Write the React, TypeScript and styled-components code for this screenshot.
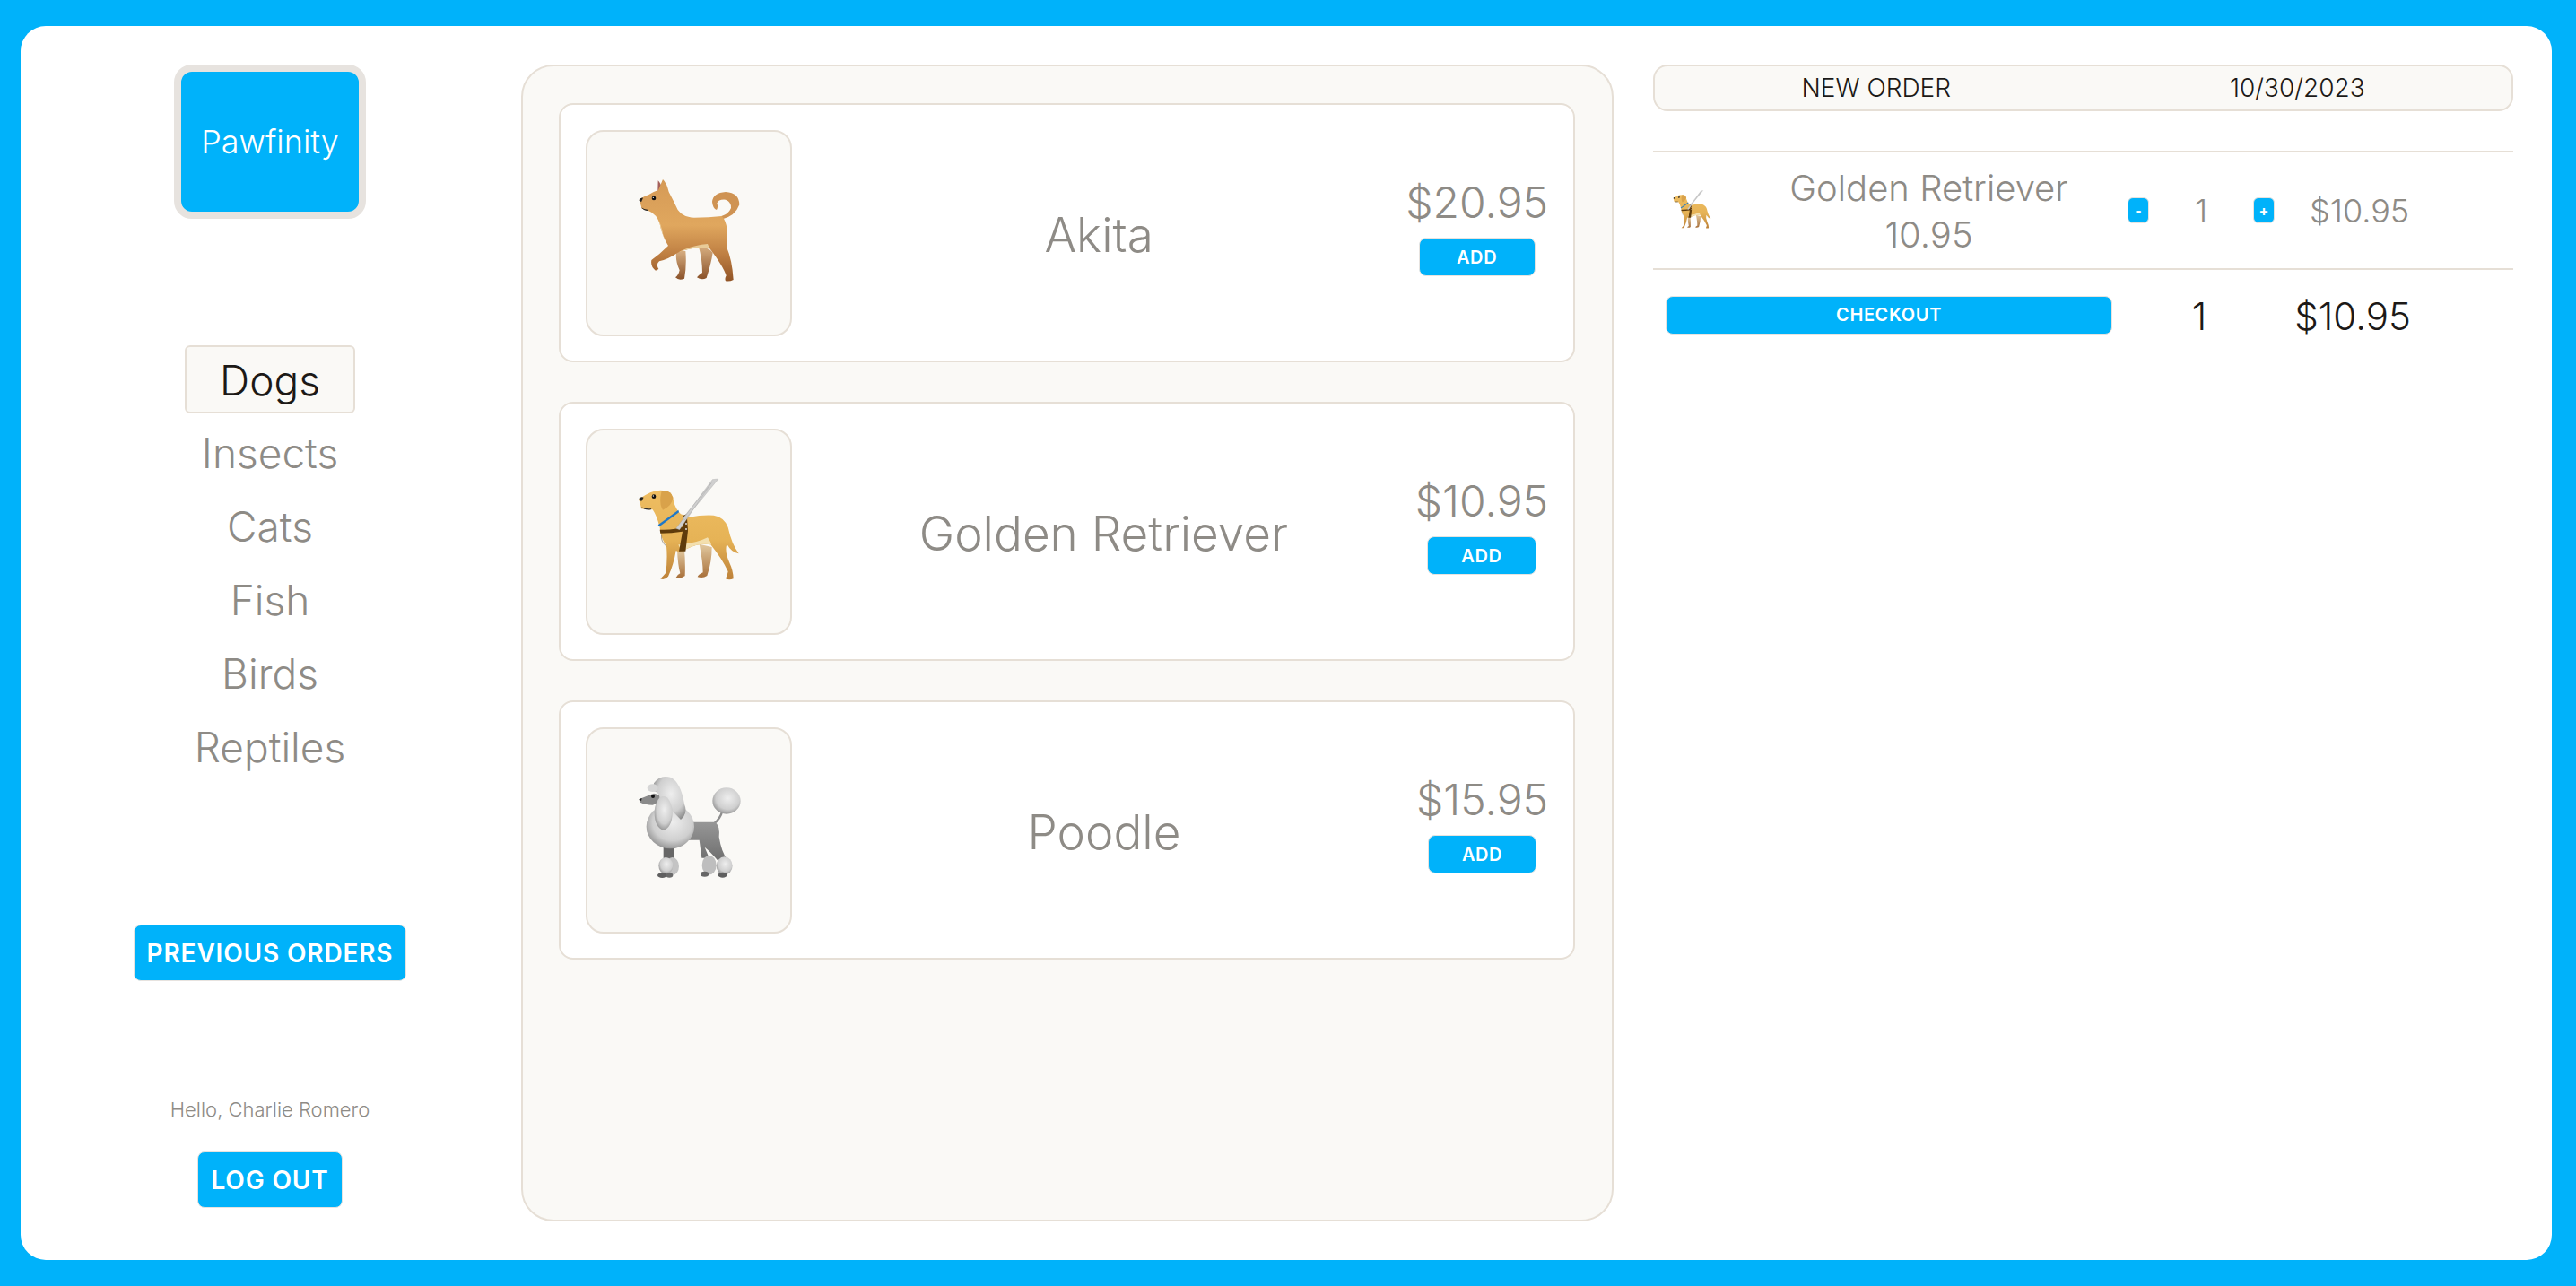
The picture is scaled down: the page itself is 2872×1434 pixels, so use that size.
import React from "react";
import styled, { createGlobalStyle } from "styled-components";

const GlobalStyle = createGlobalStyle`
  html, body { margin: 0; padding: 0; background: #00b2fa; }
  * { box-sizing: border-box; }
  body { font-family: Inter, "Liberation Sans", sans-serif; }
`;

const Frame = styled.div`
  width: 2872px;
  height: 1434px;
  padding: 29px 27px 29px 23px;
  background: #00b2fa;
`;

const Board = styled.div`
  display: flex;
  height: 1376px;
  background: #fff;
  border-radius: 28px;
  overflow: hidden;
`;

const Sidebar = styled.aside`
  width: 558px;
  padding: 43px 2px 0 0;
  display: flex;
  flex-direction: column;
  align-items: center;
`;

const Logo = styled.div`
  width: 214px;
  height: 172px;
  display: flex;
  align-items: center;
  justify-content: center;
  background: #00b2fa;
  border: 8px solid #e7e3df;
  border-radius: 20px;
  color: #fff;
  font-size: 36px;
  font-weight: 300;
`;

const Nav = styled.nav`
  margin-top: 141px;
  display: flex;
  flex-direction: column;
  align-items: center;
  gap: 6px;
`;

const NavItem = styled.div<{ $active?: boolean }>`
  height: 76px;
  padding: ${(p) => (p.$active ? 2 : 0)}px ${(p) => (p.$active ? 37 : 34)}px 0;
  display: flex;
  align-items: center;
  font-size: 46px;
  font-weight: ${(p) => (p.$active ? 300 : 320)};
  border-radius: 6px;
  border: 2px solid ${(p) => (p.$active ? "#e6dfd6" : "transparent")};
  background: ${(p) => (p.$active ? "#faf9f6" : "transparent")};
  color: ${(p) => (p.$active ? "#1c1917" : "#8e8b86")};
`;

const BlueButton = styled.button<{ $size: number; $height: number; $width?: string }>`
  height: ${(p) => p.$height}px;
  width: ${(p) => p.$width || "auto"};
  padding: 0 ${(p) => (p.$width ? 0 : 14)}px;
  background: #00b2fa;
  color: #fff;
  border: 1px solid #e7e3df;
  border-radius: 8px;
  font-family: inherit;
  font-size: ${(p) => p.$size}px;
  font-weight: 600;
  letter-spacing: 0.03em;
  text-transform: uppercase;
`;

const PreviousWrap = styled.div`
  margin-top: 160px;
`;

const Hello = styled.div`
  margin-top: 128px;
  height: 30px;
  line-height: 30px;
  font-size: 22px;
  font-weight: 300;
  color: #8e8b86;
`;

const LogoutWrap = styled.div`
  margin-top: 32px;
`;

const Menu = styled.main`
  width: 1218px;
  height: 1290px;
  margin-top: 43px;
  padding: 41px 41px 41px 40px;
  display: flex;
  flex-direction: column;
  gap: 44px;
  background: #faf9f6;
  border: 2px solid #e6dfd6;
  border-radius: 36px;
`;

const Card = styled.div`
  height: 289px;
  padding: 28px;
  display: flex;
  align-items: center;
  background: #fff;
  border: 2px solid #e6dfd6;
  border-radius: 16px;
`;

const Picture = styled.div`
  width: 230px;
  height: 230px;
  flex: none;
  display: flex;
  align-items: center;
  justify-content: center;
  background: #faf9f6;
  border: 2px solid #e6dfd6;
  border-radius: 20px;
`;

const PetName = styled.div`
  flex: 1;
  padding-top: 4px;
  text-align: center;
  font-size: 53px;
  font-weight: 320;
  color: #8e8b86;
`;

const Buy = styled.div`
  margin-bottom: 14px;
  display: flex;
  flex-direction: column;
  align-items: center;
  gap: 10px;
`;

const Price = styled.div`
  font-size: 48px;
  font-weight: 320;
  line-height: 58px;
  color: #8e8b86;
`;

const Order = styled.section`
  width: 959px;
  margin: 43px 0 0 44px;
`;

const OrderHead = styled.div`
  height: 52px;
  display: grid;
  grid-template-columns: 1fr 1fr;
  align-items: center;
  background: #faf9f6;
  border: 2px solid #e6dfd6;
  border-radius: 16px;
  font-size: 28px;
  font-weight: 300;
  color: #1c1917;
  text-align: center;
`;

const OrderTitle = styled.div`
  padding-left: 16px;
`;

const OrderRow = styled.div`
  margin-top: 44px;
  height: 133px;
  display: grid;
  grid-template-columns: 86px 443px 24px 116px 24px 1fr;
  align-items: center;
  border-top: 2px solid #e6dfd6;
  border-bottom: 2px solid #e6dfd6;
  font-size: 36px;
  font-weight: 320;
  color: #8e8b86;
`;

const PetThumb = styled.div`
  display: flex;
  justify-content: center;
`;

const RowName = styled.div`
  padding-top: 2px;
  text-align: center;
  font-size: 40px;
  line-height: 52px;
`;

const StepButton = styled.button`
  width: 24px;
  height: 29px;
  padding: 0;
  background: #00b2fa;
  color: #fff;
  border: 1px solid #e7e3df;
  border-radius: 6px;
  font-family: inherit;
  font-size: 16px;
  font-weight: 700;
`;

const Count = styled.div`
  text-align: center;
`;

const RowPrice = styled.div`
  padding-left: 39px;
`;

const Totals = styled.div`
  padding: 23px 0 0 14px;
  display: grid;
  grid-template-columns: 498px 194px 139px;
  align-items: center;
  font-size: 42px;
  font-weight: 300;
  color: #1c1917;
`;

const TotalCount = styled(Count)`
  padding-top: 3px;
`;

const TotalPrice = styled.div`
  padding-top: 3px;
  text-align: right;
`;

const AkitaIcon = () => (
  <svg width="120" height="120" viewBox="327 300 360 360">
    <defs>
      <linearGradient id="akBody" x1="0" y1="0" x2="0" y2="1">
        <stop offset="0" stopColor="#d59a56" />
        <stop offset="0.45" stopColor="#e0a75e" />
        <stop offset="0.75" stopColor="#bd7d41" />
        <stop offset="1" stopColor="#915426" />
      </linearGradient>
      <linearGradient id="akFar" x1="0" y1="0" x2="0" y2="1">
        <stop offset="0" stopColor="#d6ad80" />
        <stop offset="1" stopColor="#8a5229" />
      </linearGradient>
    </defs>
    <path d="M466 540 Q460 570 476 604 Q472 622 462 628 Q474 640 492 632 Q500 590 496 540Z" fill="url(#akFar)" />
    <path d="M540 525 Q552 570 552 612 Q540 620 534 628 Q550 638 566 630 Q582 580 587 545 Q570 525 540 525Z" fill="url(#akFar)" />
    <path d="M403 338 L404 304 Q414 312 417 334Z" fill="#a5605a" />
    <path d="M616 434 Q662 424 676 385 Q676 345 630 342 Q588 345 585 375 Q587 398 600 402 Q606 390 601 380 Q606 366 630 368 Q650 376 648 396 Q640 416 616 423Z" fill="#cf9353" />
    <path
      d="M341 368 Q350 360 372 352 Q390 340 405 336 L420 300 Q433 312 440 342 Q456 372 470 402 Q488 428 525 428 Q575 428 617 423 Q634 440 636 480 L633 526 Q652 570 656 636 Q644 642 630 640 Q626 632 632 622 Q622 590 576 530 Q535 520 470 545 Q440 566 408 574 Q396 584 406 600 L396 605 Q378 592 382 570 Q410 550 438 522 Q418 490 410 450 Q400 416 372 405 L350 398 Q345 380 341 368Z"
      fill="url(#akBody)"
    />
    <path d="M474 542 Q520 520 570 516 L576 530 Q535 522 478 542Z" fill="#e8cb98" />
    <path d="M390 410 Q410 430 422 490 L436 520 Q418 490 410 450 Q404 424 390 410Z" fill="#ecd3a4" />
    <path d="M348 394 Q358 402 372 401 L372 405 Q356 406 348 394Z" fill="#222" />
    <path d="M340 370 Q346 360 354 362 L348 376Z" fill="#222" />
    <circle cx="390" cy="363" r="7" fill="#111" />
    <circle cx="388" cy="361" r="2" fill="#fff" />
  </svg>
);

const GoldenIcon = ({ size }: { size: number }) => (
  <svg width={size} height={size} viewBox="267 219 360 360">
    <defs>
      <linearGradient id="gdBody" x1="0" y1="0" x2="0" y2="1">
        <stop offset="0" stopColor="#eebd62" />
        <stop offset="0.55" stopColor="#e6b356" />
        <stop offset="1" stopColor="#bd8139" />
      </linearGradient>
      <linearGradient id="gdFar" x1="0" y1="0" x2="0" y2="1">
        <stop offset="0" stopColor="#e2c9a0" />
        <stop offset="1" stopColor="#a8703a" />
      </linearGradient>
    </defs>
    <path d="M408 460 Q410 510 418 538 Q406 544 404 552 Q424 556 434 546 Q436 500 432 460Z" fill="url(#gdFar)" />
    <path d="M482 440 Q494 500 494 535 Q478 542 476 550 Q494 556 508 546 Q524 500 524 450Z" fill="url(#gdFar)" />
    <path
      d="M279 290 Q300 276 318 268 Q340 256 372 262 Q394 270 396 296 Q402 322 420 340 L448 350 Q490 342 530 344 Q566 350 578 384 Q590 440 614 472 Q590 468 574 440 Q566 465 582 500 Q596 530 596 556 Q582 562 570 556 Q576 544 578 532 Q560 492 520 442 Q480 436 440 456 Q415 470 404 462 Q396 510 378 548 Q366 562 352 556 Q362 546 370 536 Q376 490 372 446 Q352 420 350 385 Q340 345 326 325 Q310 325 288 322 Q284 300 279 290Z"
      fill="url(#gdBody)"
    />
    <path d="M412 442 Q470 438 510 418 Q520 432 522 442 Q478 436 440 456 Q420 466 412 442Z" fill="#f3dfae" />
    <path d="M356 262 Q388 258 394 284 Q392 310 360 326 Q350 310 352 284Z" fill="#d9a24a" />
    <path d="M344 376 L412 326 L414 334 L348 382Z" fill="#1f78c8" />
    <path d="M350 392 Q400 394 428 382 L428 345 L440 340 L444 395 L436 464 L414 464 L426 398 Q390 404 352 404Z" fill="#5f3c0c" />
    <path d="M356 410 Q352 430 372 448" fill="none" stroke="#7b7366" strokeWidth="2" />
    <path d="M404 388 L526 224 L546 222 L432 360 L428 352 L522 236 L416 392Z" fill="#cfcfcf" stroke="#9d9d9d" strokeWidth="1" />
    <circle cx="438" cy="372" r="3" fill="#ddd" />
    <circle cx="438" cy="390" r="3" fill="#ddd" />
    <path d="M280 288 Q286 280 296 284 L288 298Z" fill="#222" />
    <path d="M288 316 Q304 324 322 321 L320 325 Q300 328 288 316Z" fill="#2b2b2b" />
    <circle cx="330" cy="281" r="7" fill="#111" />
    <circle cx="328" cy="279" r="2" fill="#fff" />
  </svg>
);

const PoodleIcon = () => (
  <svg width="120" height="120" viewBox="267 228 360 360">
    <defs>
      <radialGradient id="pdPuff" cx="0.55" cy="0.4" r="0.7">
        <stop offset="0" stopColor="#eeeeee" />
        <stop offset="0.6" stopColor="#cfcfcf" />
        <stop offset="1" stopColor="#7d7d7d" />
      </radialGradient>
      <linearGradient id="pdGrey" x1="0" y1="0" x2="0" y2="1">
        <stop offset="0" stopColor="#979797" />
        <stop offset="1" stopColor="#6e6e6e" />
      </linearGradient>
    </defs>
    <path d="M530 386 Q552 370 560 340" fill="none" stroke="#8e8e8e" strokeWidth="7" />
    <ellipse cx="573" cy="309" rx="47" ry="44" fill="url(#pdPuff)" />
    <path d="M450 380 L535 380 Q552 392 548 430 Q556 480 575 505 L545 510 Q520 480 500 464 L515 500 L490 500 L482 440 L440 440Z" fill="url(#pdGrey)" />
    <rect x="362" y="455" width="36" height="50" fill="#676767" />
    <ellipse cx="392" cy="528" rx="22" ry="30" fill="#c4c4c4" />
    <ellipse cx="370" cy="526" rx="24" ry="28" fill="url(#pdPuff)" />
    <ellipse cx="515" cy="524" rx="24" ry="32" fill="#bebebe" />
    <ellipse cx="566" cy="526" rx="27" ry="30" fill="url(#pdPuff)" />
    <ellipse cx="358" cy="558" rx="16" ry="9" fill="#5f5f5f" />
    <ellipse cx="382" cy="558" rx="12" ry="8" fill="#6a6a6a" />
    <ellipse cx="500" cy="554" rx="14" ry="9" fill="#666" />
    <ellipse cx="560" cy="557" rx="15" ry="9" fill="#5f5f5f" />
    <ellipse cx="385" cy="395" rx="80" ry="74" fill="url(#pdPuff)" />
    <path d="M280 304 Q300 295 330 284 L352 290 Q350 318 326 323 Q300 322 284 314Z" fill="#8a8a8a" />
    <path d="M330 250 Q350 222 385 230 Q420 245 432 320 Q445 350 420 372 L350 300 Q348 280 328 275Z" fill="url(#pdPuff)" />
    <ellipse cx="326" cy="266" rx="18" ry="13" fill="#d6d6d6" />
    <ellipse cx="362" cy="350" rx="30" ry="56" fill="url(#pdPuff)" />
    <circle cx="327" cy="294" r="6" fill="#111" />
    <path d="M280 304 L290 300 L288 310Z" fill="#222" />
  </svg>
);

const pets = [
  { name: "Akita", price: "$20.95", icon: <AkitaIcon /> },
  { name: "Golden Retriever", price: "$10.95", icon: <GoldenIcon size={120} /> },
  { name: "Poodle", price: "$15.95", icon: <PoodleIcon /> },
];

const categories = ["Dogs", "Insects", "Cats", "Fish", "Birds", "Reptiles"];

const App = () => {
  return (
    <>
      <GlobalStyle />
      <Frame>
        <Board>
          <Sidebar>
            <Logo>Pawfinity</Logo>
            <Nav>
              {categories.map((cat, index) => (
                <NavItem key={cat} $active={index === 0}>
                  {cat}
                </NavItem>
              ))}
            </Nav>
            <PreviousWrap>
              <BlueButton $size={28} $height={63}>Previous Orders</BlueButton>
            </PreviousWrap>
            <Hello>Hello, Charlie Romero</Hello>
            <LogoutWrap>
              <BlueButton $size={28} $height={63}>Log Out</BlueButton>
            </LogoutWrap>
          </Sidebar>

          <Menu>
            {pets.map((pet) => (
              <Card key={pet.name}>
                <Picture>{pet.icon}</Picture>
                <PetName>{pet.name}</PetName>
                <Buy>
                  <Price>{pet.price}</Price>
                  <BlueButton $size={20} $height={43} $width="82%">Add</BlueButton>
                </Buy>
              </Card>
            ))}
          </Menu>

          <Order>
            <OrderHead>
              <OrderTitle>NEW ORDER</OrderTitle>
              <div>10/30/2023</div>
            </OrderHead>
            <OrderRow>
              <PetThumb>
                <GoldenIcon size={45} />
              </PetThumb>
              <RowName>
                Golden Retriever
                <br />
                10.95
              </RowName>
              <StepButton>-</StepButton>
              <Count>1</Count>
              <StepButton>+</StepButton>
              <RowPrice>$10.95</RowPrice>
            </OrderRow>
            <Totals>
              <BlueButton $size={20} $height={43} $width="100%">Checkout</BlueButton>
              <TotalCount>1</TotalCount>
              <TotalPrice>$10.95</TotalPrice>
            </Totals>
          </Order>
        </Board>
      </Frame>
    </>
  );
};

export default App;
